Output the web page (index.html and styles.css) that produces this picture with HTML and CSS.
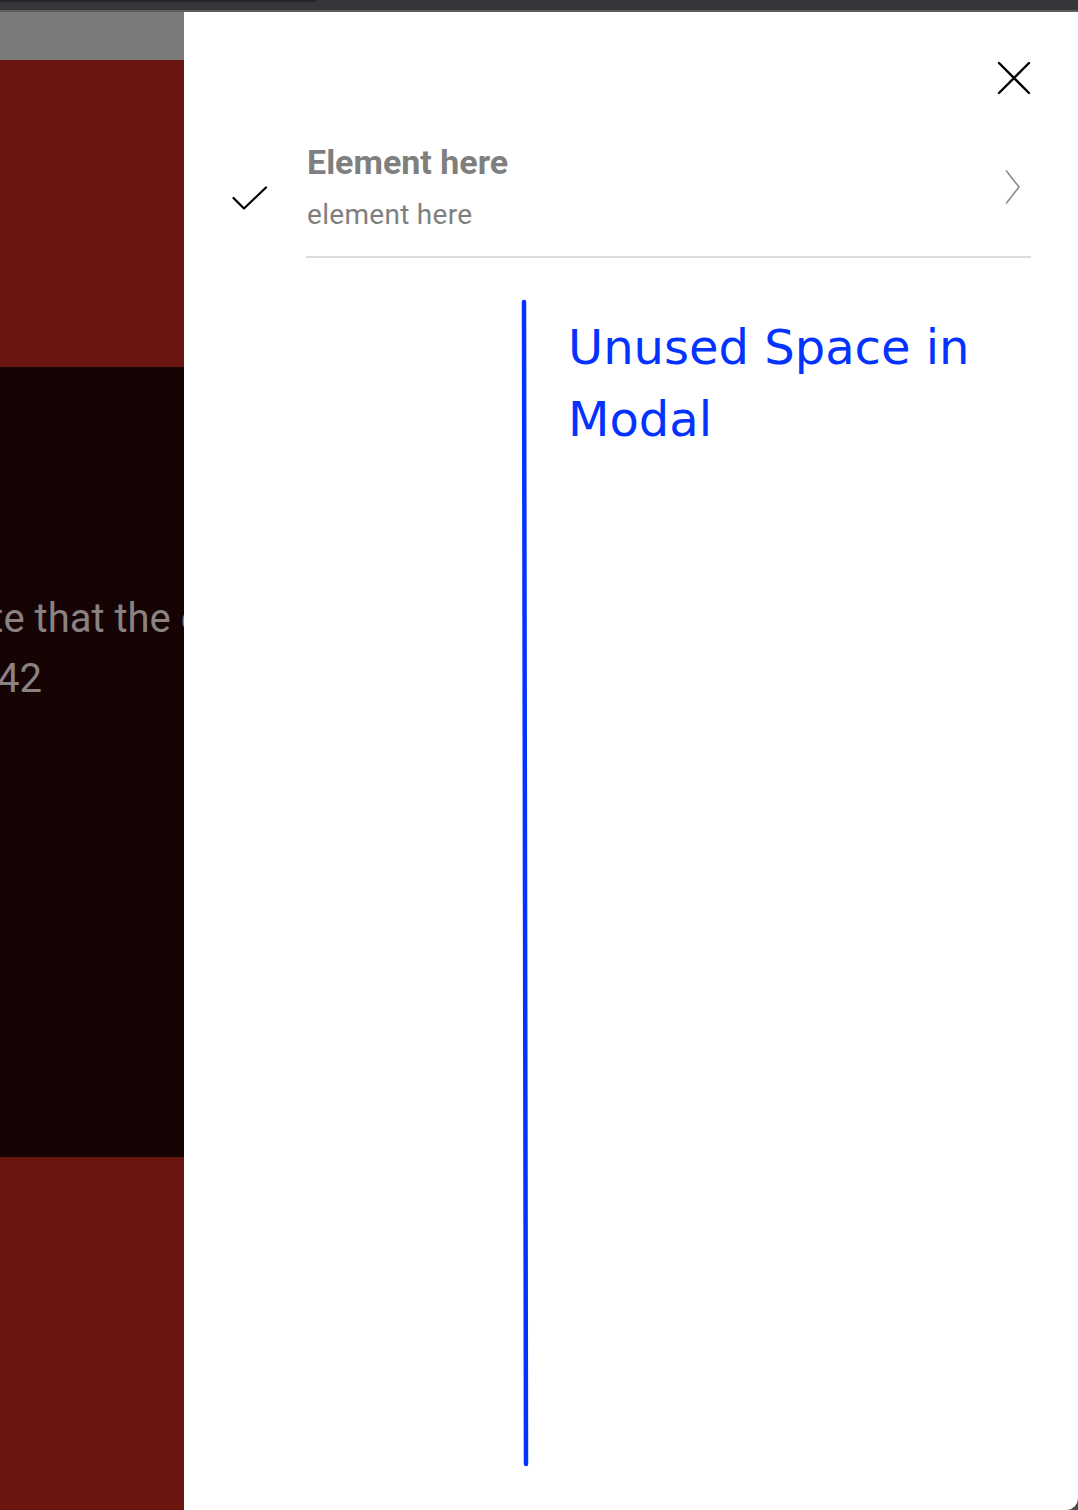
FILE: index.html
```html
<!DOCTYPE html>
<html lang="en">
<head>
<meta charset="utf-8">
<title>Modal</title>
<link rel="stylesheet" href="styles.css">
</head>
<body>
<div class="chrome">
  <div class="tabstrip"><div class="tab-shade"></div></div>
  <div class="chrome-edge"></div>
</div>
<div class="stage">
  <div class="backdrop">
    <div class="bd-gray"></div>
    <div class="bd-red"></div>
    <div class="bd-dark">
      <p class="bd-line bd-line-1">Note that the c</p>
      <p class="bd-line bd-line-2">42</p>
    </div>
    <div class="bd-red bd-red-bottom"></div>
  </div>
  <div class="modal">
    <div class="modal-head">
      <button class="close" aria-label="Close">
        <svg width="34" height="34" viewBox="0 0 34 34"><path d="M2 2 L32 32 M32 2 L2 32" fill="none" stroke="#000" stroke-width="2.4" stroke-linecap="round"/></svg>
      </button>
    </div>
    <div class="item">
      <div class="check">
        <svg width="36" height="26" viewBox="0 0 36 26"><path d="M1.5 12 L12 22.5 L34 1.5" fill="none" stroke="#000" stroke-width="2.2" stroke-linecap="round" stroke-linejoin="round"/></svg>
      </div>
      <div class="item-body">
        <div class="item-text">
          <div class="item-title">Element here</div>
          <div class="item-sub">element here</div>
        </div>
        <svg class="chevron" width="16" height="34" viewBox="0 0 16 34"><path d="M1.5 1 L14 17 L1.5 33" fill="none" stroke="#8a8a8a" stroke-width="1.6" stroke-linecap="round" stroke-linejoin="round"/></svg>
      </div>
    </div>
    <svg class="annot-line" width="894" height="1498" viewBox="0 0 894 1498"><path d="M340 290 L342 1452" stroke="#0433ff" stroke-width="4.5" stroke-linecap="round" fill="none"/></svg>
    <div class="annot-text">Unused Space in<br>Modal</div>
  </div>
</div>
</body>
</html>
```
FILE: styles.css
```css
html, body {
  margin: 0;
  padding: 0;
}
body {
  width: 1078px;
  height: 1510px;
  overflow: hidden;
  background: #4a4a4c;
  font-family: Roboto, "Liberation Sans", sans-serif;
}
.chrome {
  height: 12px;
}
.tabstrip {
  height: 10px;
  background: #35363a;
}
.tab-shade {
  width: 316px;
  height: 2px;
  background: #232427;
  border-bottom-right-radius: 3px;
}
.chrome-edge {
  height: 2px;
  background: #5e5e60;
}
.stage {
  display: flex;
  height: 1498px;
}
.backdrop {
  width: 184px;
  flex: none;
  display: flex;
  flex-direction: column;
  overflow: hidden;
}
.bd-gray {
  height: 48px;
  background: #7b7b7b;
}
.bd-red {
  height: 307px;
  background: #6b1511;
}
.bd-red-bottom {
  flex: 1;
  height: auto;
}
.bd-dark {
  height: 790px;
  background: #160404;
  padding-top: 222px;
  box-sizing: border-box;
}
.bd-line {
  margin: 0;
  font-size: 40px;
  line-height: 60px;
  color: #8a8282;
  white-space: nowrap;
}
.bd-line-1 {
  text-indent: -61px;
}
.bd-line-2 {
  text-indent: -3px;
}
.modal {
  flex: 1;
  position: relative;
  background: #fff;
  border-bottom-right-radius: 12px;
  padding: 49px 47px 0 48px;
}
.modal-head {
  display: flex;
  justify-content: flex-end;
}
.close {
  border: 0;
  padding: 0;
  margin: 0;
  background: none;
  width: 34px;
  height: 34px;
  display: block;
}
.close svg {
  display: block;
}
.item {
  display: flex;
  align-items: flex-start;
  margin-top: 47px;
}
.check {
  width: 74px;
  flex: none;
  padding-top: 44px;
}
.check svg {
  display: block;
}
.item-body {
  flex: 1;
  display: flex;
  align-items: flex-start;
  justify-content: space-between;
  border-bottom: 2px solid #dcdcdc;
  padding: 0 10px 24px 0;
}
.item-text {
  padding-left: 1px;
}
.item-title {
  font-size: 34px;
  line-height: 40px;
  font-weight: 700;
  color: #7f7f7f;
}
.item-sub {
  margin-top: 16px;
  font-size: 28px;
  line-height: 34px;
  color: #7f7f7f;
  letter-spacing: 0.3px;
}
.chevron {
  display: block;
  margin-top: 28px;
}
.annot-line {
  position: absolute;
  left: 0;
  top: 0;
  pointer-events: none;
}
.annot-text {
  position: absolute;
  left: 384px;
  top: 299px;
  font-family: "DejaVu Sans", Verdana, sans-serif;
  font-size: 48px;
  line-height: 72px;
  color: #0433ff;
  white-space: nowrap;
}
```
